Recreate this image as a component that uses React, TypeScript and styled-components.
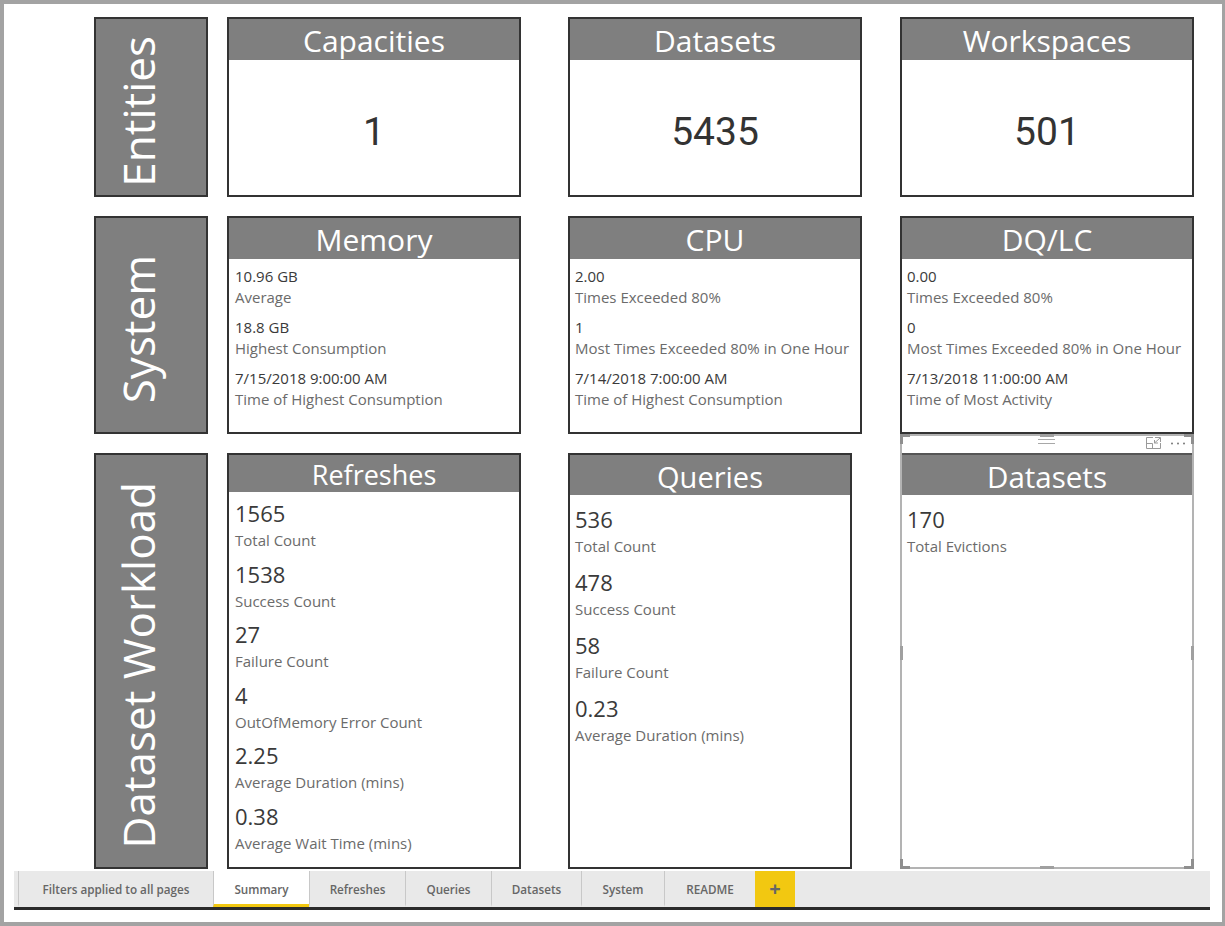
import React from "react";
import styled, { createGlobalStyle } from "styled-components";

const GlobalStyle = createGlobalStyle`
  html, body {
    margin: 0;
    padding: 0;
    background: white;
  }
  * {
    box-sizing: border-box;
  }
`;

const Frame = styled("div")`
  width: 1225px;
  height: 926px;
  border-style: solid;
  border-color: #a3a3a3;
  border-width: 4px 3px 4px 4px;
  background: white;
  padding-top: 13px;
  font-family: "Open Sans", "Liberation Sans", sans-serif;
  overflow: hidden;
`;

const Board = styled("div")`
  display: grid;
  grid-template-columns: 114px 313px 341px 332px;
  grid-template-rows: 180px 218px 416px;
  row-gap: 19px;
  margin-left: 90px;
`;

const SectionLabel = styled("div")`
  background: #7f7f7f;
  border: 2px solid #333;
  color: white;
  display: flex;
  align-items: center;
  justify-content: center;
  padding: 8px 26px 0 0;
  span {
    writing-mode: vertical-rl;
    transform: rotate(180deg);
    font-size: 44px;
    line-height: 1;
    white-space: nowrap;
  }
`;

const Card = styled("div")<{ $width?: number }>`
  width: ${props => props.$width || 294}px;
  justify-self: end;
  margin-right: ${props => (props.$width ? 294 - props.$width : 0)}px;
  border: 2px solid #333;
  display: flex;
  flex-direction: column;
  background: white;
`;

const CardTitle = styled("div")<{ $height: number; $size: number }>`
  background: #7f7f7f;
  color: white;
  height: ${props => props.$height}px;
  flex: none;
  font-size: ${props => props.$size}px;
  line-height: ${props => props.$height + 3}px;
  text-align: center;
  white-space: nowrap;
`;

const BigNumber = styled("div")`
  flex: 1;
  display: flex;
  align-items: center;
  justify-content: center;
  padding-top: 8px;
  font-family: Roboto, "Liberation Sans", sans-serif;
  font-size: 39px;
  color: #333;
`;

const Stats = styled("div")<{ $gap: number; $top: number; $left: number }>`
  display: flex;
  flex-direction: column;
  gap: ${props => props.$gap}px;
  padding: ${props => props.$top}px 0 0 ${props => props.$left}px;
`;

const Stat = styled("div")`
  display: flex;
  flex-direction: column;
  white-space: nowrap;
`;

const StatValue = styled("div")<{ $big?: boolean }>`
  color: #3a3a3a;
  font-size: ${props => (props.$big ? 22 : 15)}px;
  line-height: ${props => (props.$big ? 33 : 21)}px;
`;

const StatLabel = styled("div")`
  color: #6b6b6b;
  font-size: 15px;
  line-height: 21px;
`;

const SelectedVisual = styled("div")`
  position: relative;
  width: 294px;
  justify-self: end;
  margin-top: -19px;
  border: 2px solid #b3b3b3;
  display: flex;
  flex-direction: column;
  background: white;
`;

const VisualBar = styled("div")`
  height: 19px;
  flex: none;
  display: flex;
  align-items: center;
  justify-content: flex-end;
  gap: 9px;
  padding: 0 6px 3px 0;
  position: relative;
  border-bottom: 2px solid #555;
  svg {
    display: block;
  }
`;

const Grip = styled("div")`
  position: absolute;
  left: 136px;
  top: 3px;
  width: 17px;
  height: 5px;
  border-top: 1px solid #a8a8a8;
  border-bottom: 1px solid #a8a8a8;
`;

const Handle = styled("div")<{ $corner: "tl" | "tr" | "bl" | "br" }>`
  position: absolute;
  width: 10px;
  height: 10px;
  ${props => (props.$corner[0] === "t" ? "top: -2px;" : "bottom: -2px;")}
  ${props => (props.$corner[1] === "l" ? "left: -2px;" : "right: -2px;")}
  border-style: solid;
  border-color: #8f8f8f;
  border-width: ${props =>
    ({ tl: "3px 0 0 3px", tr: "3px 3px 0 0", bl: "0 0 3px 3px", br: "0 3px 3px 0" })[props.$corner]};
`;

const SideHandle = styled("div")<{ $side: "left" | "right" | "top" | "bottom" }>`
  position: absolute;
  background: #a0a0a0;
  ${props =>
    props.$side === "left" || props.$side === "right"
      ? `${props.$side}: -2px; top: 210px; width: 3px; height: 14px;`
      : `${props.$side}: -2px; left: 138px; width: 14px; height: 3px;`}
`;

const TabBar = styled("div")`
  display: flex;
  height: 39px;
  width: 1196px;
  margin: 2px 0 0 10px;
  padding-left: 4px;
  background: #e9e9e9;
  border-bottom: 3px solid #2b2b2b;
`;

const Tab = styled("div")<{ $width: number; $active?: boolean }>`
  width: ${props => props.$width}px;
  display: flex;
  align-items: center;
  justify-content: center;
  font-size: 11.7px;
  font-weight: 600;
  color: #666;
  white-space: nowrap;
  border-left: 1px solid #c8c8c8;
  background: ${props => (props.$active ? "white" : "transparent")};
  border-bottom: 3px solid ${props => (props.$active ? "#f2c811" : "transparent")};
  padding-top: 3px;
`;

const AddTab = styled("div")`
  width: 40px;
  background: #f2c811;
  display: flex;
  align-items: center;
  justify-content: center;
  color: #666;
  font-size: 20px;
  font-weight: 700;
  line-height: 1;
`;

type StatRow = [string, string];

const memory: StatRow[] = [
  ["10.96 GB", "Average"],
  ["18.8 GB", "Highest Consumption"],
  ["7/15/2018 9:00:00 AM", "Time of Highest Consumption"],
];
const cpu: StatRow[] = [
  ["2.00", "Times Exceeded 80%"],
  ["1", "Most Times Exceeded 80% in One Hour"],
  ["7/14/2018 7:00:00 AM", "Time of Highest Consumption"],
];
const dqlc: StatRow[] = [
  ["0.00", "Times Exceeded 80%"],
  ["0", "Most Times Exceeded 80% in One Hour"],
  ["7/13/2018 11:00:00 AM", "Time of Most Activity"],
];
const refreshes: StatRow[] = [
  ["1565", "Total Count"],
  ["1538", "Success Count"],
  ["27", "Failure Count"],
  ["4", "OutOfMemory Error Count"],
  ["2.25", "Average Duration (mins)"],
  ["0.38", "Average Wait Time (mins)"],
];
const queries: StatRow[] = [
  ["536", "Total Count"],
  ["478", "Success Count"],
  ["58", "Failure Count"],
  ["0.23", "Average Duration (mins)"],
];
const tabs = [
  { name: "Filters applied to all pages", width: 195 },
  { name: "Summary", width: 96, active: true },
  { name: "Refreshes", width: 96 },
  { name: "Queries", width: 86 },
  { name: "Datasets", width: 90 },
  { name: "System", width: 83 },
  { name: "README", width: 91 },
];

type StatListProps = { rows: StatRow[]; big?: boolean; gap: number; top: number; left?: number };

const StatList: React.FC<StatListProps> = ({ rows, big, gap, top, left = 5 }) => (
  <Stats $gap={gap} $top={top} $left={left}>
    {rows.map(([value, label]) => (
      <Stat key={label + value}>
        <StatValue $big={big}>{value}</StatValue>
        <StatLabel>{label}</StatLabel>
      </Stat>
    ))}
  </Stats>
);

const App: React.FC = () => (
  <Frame>
    <GlobalStyle />
    <Board>
      <SectionLabel><span>Entities</span></SectionLabel>
      <Card>
        <CardTitle $height={41} $size={30}>Capacities</CardTitle>
        <BigNumber>1</BigNumber>
      </Card>
      <Card>
        <CardTitle $height={41} $size={30}>Datasets</CardTitle>
        <BigNumber>5435</BigNumber>
      </Card>
      <Card>
        <CardTitle $height={41} $size={30}>Workspaces</CardTitle>
        <BigNumber>501</BigNumber>
      </Card>

      <SectionLabel><span>System</span></SectionLabel>
      <Card>
        <CardTitle $height={41} $size={30}>Memory</CardTitle>
        <StatList rows={memory} gap={9} top={7} left={6} />
      </Card>
      <Card>
        <CardTitle $height={41} $size={30}>CPU</CardTitle>
        <StatList rows={cpu} gap={9} top={7} />
      </Card>
      <Card>
        <CardTitle $height={41} $size={30}>DQ/LC</CardTitle>
        <StatList rows={dqlc} gap={9} top={7} />
      </Card>

      <SectionLabel><span>Dataset Workload</span></SectionLabel>
      <Card>
        <CardTitle $height={37} $size={27}>Refreshes</CardTitle>
        <StatList rows={refreshes} big gap={6.5} top={5} left={6} />
      </Card>
      <Card $width={284}>
        <CardTitle $height={40} $size={29}>Queries</CardTitle>
        <StatList rows={queries} big gap={9} top={8} />
      </Card>
      <SelectedVisual>
        <VisualBar>
          <Grip />
          <svg width="15" height="12" viewBox="0 0 15 12" fill="none" stroke="#9a9a9a" strokeWidth="1">
            <path d="M7 .5H.5v11h14V6M.5 6.500h6v5M9 .5h5.500V5M14 1L8.500 6M8.500 3v3h3.500" />
          </svg>
          <svg width="16" height="3" viewBox="0 0 16 3" fill="#777">
            <circle cx="2" cy="1.500" r="1" />
            <circle cx="8" cy="1.500" r="1" />
            <circle cx="14" cy="1.500" r="1" />
          </svg>
        </VisualBar>
        <CardTitle $height={40} $size={29.5}>Datasets</CardTitle>
        <StatList rows={[["170", "Total Evictions"]]} big gap={0} top={8} />
        <Handle $corner="tl" />
        <Handle $corner="tr" />
        <Handle $corner="bl" />
        <Handle $corner="br" />
        <SideHandle $side="left" />
        <SideHandle $side="right" />
        <SideHandle $side="top" />
        <SideHandle $side="bottom" />
      </SelectedVisual>
    </Board>
    <TabBar>
      {tabs.map(tab => (
        <Tab key={tab.name} $width={tab.width} $active={tab.active}>{tab.name}</Tab>
      ))}
      <AddTab>+</AddTab>
    </TabBar>
  </Frame>
);

export default App;
